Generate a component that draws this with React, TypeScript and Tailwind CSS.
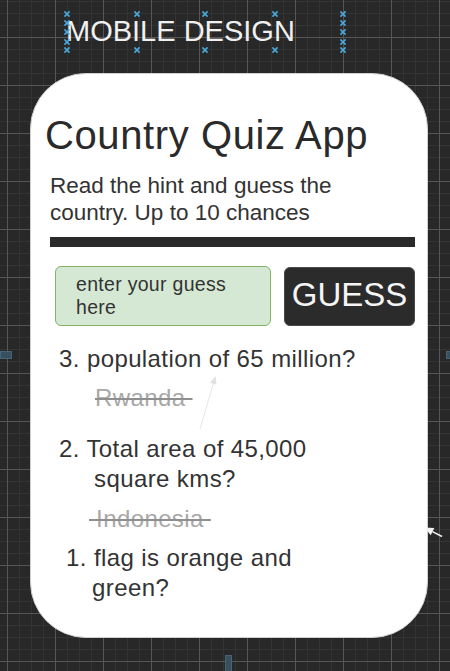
const handles: [number, number][] = [
  [67, 14], [67, 23], [67, 32], [67, 42], [67, 50],
  [137, 14], [137, 50],
  [205, 14], [205, 50],
  [275, 14], [275, 50],
  [343, 14], [343, 23], [343, 32], [343, 42], [343, 50],
];

function Overlay() {
  return (
    <svg
      className="pointer-events-none absolute inset-0"
      width={450}
      height={671}
      viewBox="0 0 450 671"
    >
      {handles.map(([x, y], i) => (
        <g key={i} stroke="#4ba8e0" strokeWidth={1.6} strokeLinecap="square">
          <line x1={x - 2} y1={y - 2} x2={x + 2} y2={y + 2} />
          <line x1={x - 2} y1={y + 2} x2={x + 2} y2={y - 2} />
        </g>
      ))}

      {/* arrow pointing at the hint */}
      <line x1={200} y1={429} x2={213.3} y2={383.7} stroke="#e6e6e6" strokeWidth={1} />
      <polygon points="215.5,376 216.6,384.7 209.9,382.7" fill="#e2e2e2" />

      {/* arrow at the right edge */}
      <line x1={432.5} y1={531.6} x2={442} y2={536.5} stroke="#f2f2f2" strokeWidth={1.5} />
      <polygon points="424.5,527.5 434.3,528 430.7,535.2" fill="#f2f2f2" />
    </svg>
  );
}

const question = "text-[24px] leading-[30px] tracking-[0.4px] text-[#333333]";
const wrong =
  "text-[24px] leading-[30px] tracking-[0.4px] text-[#a8a8a8] whitespace-pre line-through decoration-[#8f8f8f] decoration-2";

export default function App() {
  return (
    <div
      className="relative flex h-[671px] w-[450px] flex-col overflow-hidden bg-[#282828] bg-[linear-gradient(to_right,#565656_1px,transparent_1px),linear-gradient(to_bottom,#565656_1px,transparent_1px),linear-gradient(to_right,#343434_1px,transparent_1px),linear-gradient(to_bottom,#343434_1px,transparent_1px)] bg-size-[48px_48px,48px_48px,12px_12px,12px_12px] bg-position-[7px_37px,7px_37px,7px_37px,7px_37px]"
      style={{ fontFamily: '"Liberation Sans", Arial, sans-serif' }}
    >
      {/* half-hidden shapes at the canvas edges */}
      <div className="absolute left-0 top-[351px] h-[8px] w-[12px] border border-[#4a6374] bg-[#36505f]" />
      <div className="absolute left-[446px] top-[351px] h-[8px] w-[8px] border border-[#4a6374] bg-[#36505f]" />
      <div className="absolute left-[225px] top-[655px] h-[20px] w-[7px] border border-[#4a6374] bg-[#36505f]" />

      <div className="ml-[66px] mt-[17px] text-[29px] leading-[29px] text-[#f0f0f0]">
        MOBILE DESIGN
      </div>

      <div className="ml-[30px] mt-[27px] flex h-[565px] w-[398px] flex-col rounded-[56px] border border-[#cfcfcf] bg-white">
        <h1 className="ml-[14px] mt-[42px] text-[40px] leading-[38px] tracking-[0.6px] text-[#2a2a2a]">
          Country Quiz App
        </h1>
        <p className="ml-[19px] mt-[18px] text-[22.5px] leading-[27px] text-[#333333]">
          Read the hint and guess the
          <br />
          country. Up to 10 chances
        </p>
        <div className="ml-[19px] mt-[11px] h-[10px] w-[365px] bg-[#2a2a2a]" />

        <div className="mt-[19px] flex items-start">
          <div className="ml-[24px] flex h-[60px] w-[216px] items-center rounded-[6px] border border-[#82b366] bg-[#d5e8d4] pl-[20px] text-[19.5px] leading-[23px] tracking-[0.3px] text-[#333333]">
            enter your guess
            <br />
            here
          </div>
          <button className="ml-[13px] mt-[1px] flex h-[59px] w-[131px] items-center justify-center rounded-[6px] border border-[#4a4a4a] bg-[#2b2b2b] pb-[5px] text-[33px] leading-[33px] text-[#f5f5f5]">
            GUESS
          </button>
        </div>

        <div className={`ml-[28px] mt-[18px] ${question}`}>3. population of 65 million?</div>
        <div className={`ml-[64px] mt-[9px] self-start ${wrong}`}>{"Rwanda "}</div>

        <div className={`ml-[28px] mt-[21px] ${question}`}>2. Total area of 45,000</div>
        <div className={`ml-[63px] ${question}`}>square kms?</div>
        <div className={`ml-[58px] mt-[10px] self-start ${wrong}`}>{" Indonesia "}</div>

        <div className={`ml-[35px] mt-[9px] ${question}`}>1. flag is orange and</div>
        <div className={`ml-[61px] ${question}`}>green?</div>
      </div>

      <Overlay />
    </div>
  );
}
